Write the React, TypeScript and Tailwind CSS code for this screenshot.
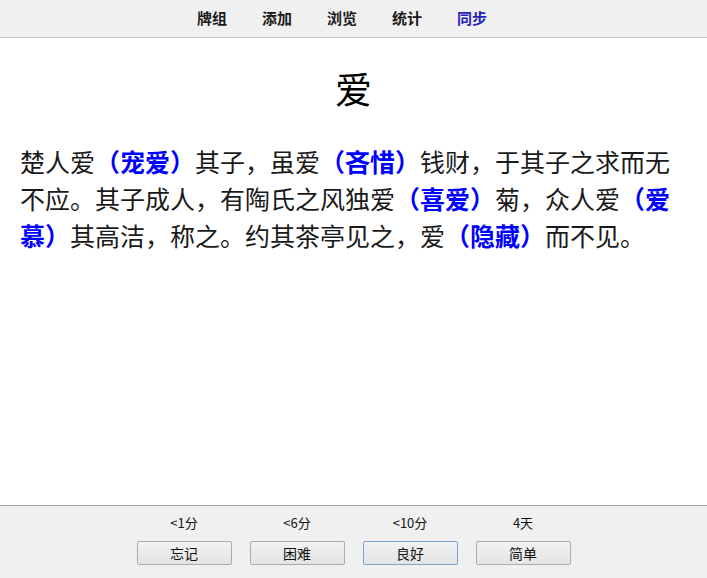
const nav = ["牌组", "添加", "浏览", "统计", "同步"];

const answers = [
  { due: "<1分", label: "忘记" },
  { due: "<6分", label: "困难" },
  { due: "<10分", label: "良好", focus: true },
  { due: "4天", label: "简单" },
];

function Hl({ children }: { children: string }) {
  return <span className="font-semibold text-[#0000ff]">{children}</span>;
}

export default function App() {
  return (
    <div className="flex h-screen w-full flex-col bg-white font-['Liberation_Serif','Noto_Sans_CJK_SC',serif] text-black">
      {/* toolbar */}
      <header className="flex h-[38px] shrink-0 items-center justify-center gap-[35px] border-b border-[#c8c8c8] bg-[#f0f0f0] pr-[23px] font-['Noto_Sans_CJK_SC',sans-serif] text-[15px] font-bold">
        {nav.map((n) => (
          <a key={n} className={n === "同步" ? "text-[#2a22b8]" : "text-[#1a1a1a]"}>
            {n}
          </a>
        ))}
      </header>

      {/* card */}
      <main className="flex-1 overflow-hidden px-[20px]">
        <div className="mt-[30px] text-center text-[37px] leading-[48px]">爱</div>
        <p className="mt-[29px] text-[25px] leading-[37px] text-[#1a1a1a]">
          楚人爱<Hl>（宠爱）</Hl>其子，虽爱<Hl>（吝惜）</Hl>钱财，于其子之求而无不应。其子成人，有陶氏之风独爱
          <Hl>（喜爱）</Hl>菊，众人爱<Hl>（爱慕）</Hl>其高洁，称之。约其茶亭见之，爱<Hl>（隐藏）</Hl>而不见。
        </p>
      </main>

      {/* answer bar */}
      <footer className="flex h-[73px] shrink-0 justify-center gap-[18px] border-t border-[#a0a0a0] bg-[#f0f0f0] pt-[8px] font-['Noto_Sans_CJK_SC',sans-serif]">
        {answers.map((a) => (
          <div key={a.label} className="flex w-[95px] flex-col items-center">
            <span className="text-[13px] leading-[18px] text-[#111]">{a.due}</span>
            <button
              className={`mt-[9px] h-[24px] w-[95px] rounded-[2px] border bg-gradient-to-b from-[#f2f2f2] to-[#e4e4e4] text-[14px] leading-none text-[#111] ${
                a.focus ? "border-[#7da2ce]" : "border-[#acacac]"
              }`}
            >
              {a.label}
            </button>
          </div>
        ))}
      </footer>
    </div>
  );
}
